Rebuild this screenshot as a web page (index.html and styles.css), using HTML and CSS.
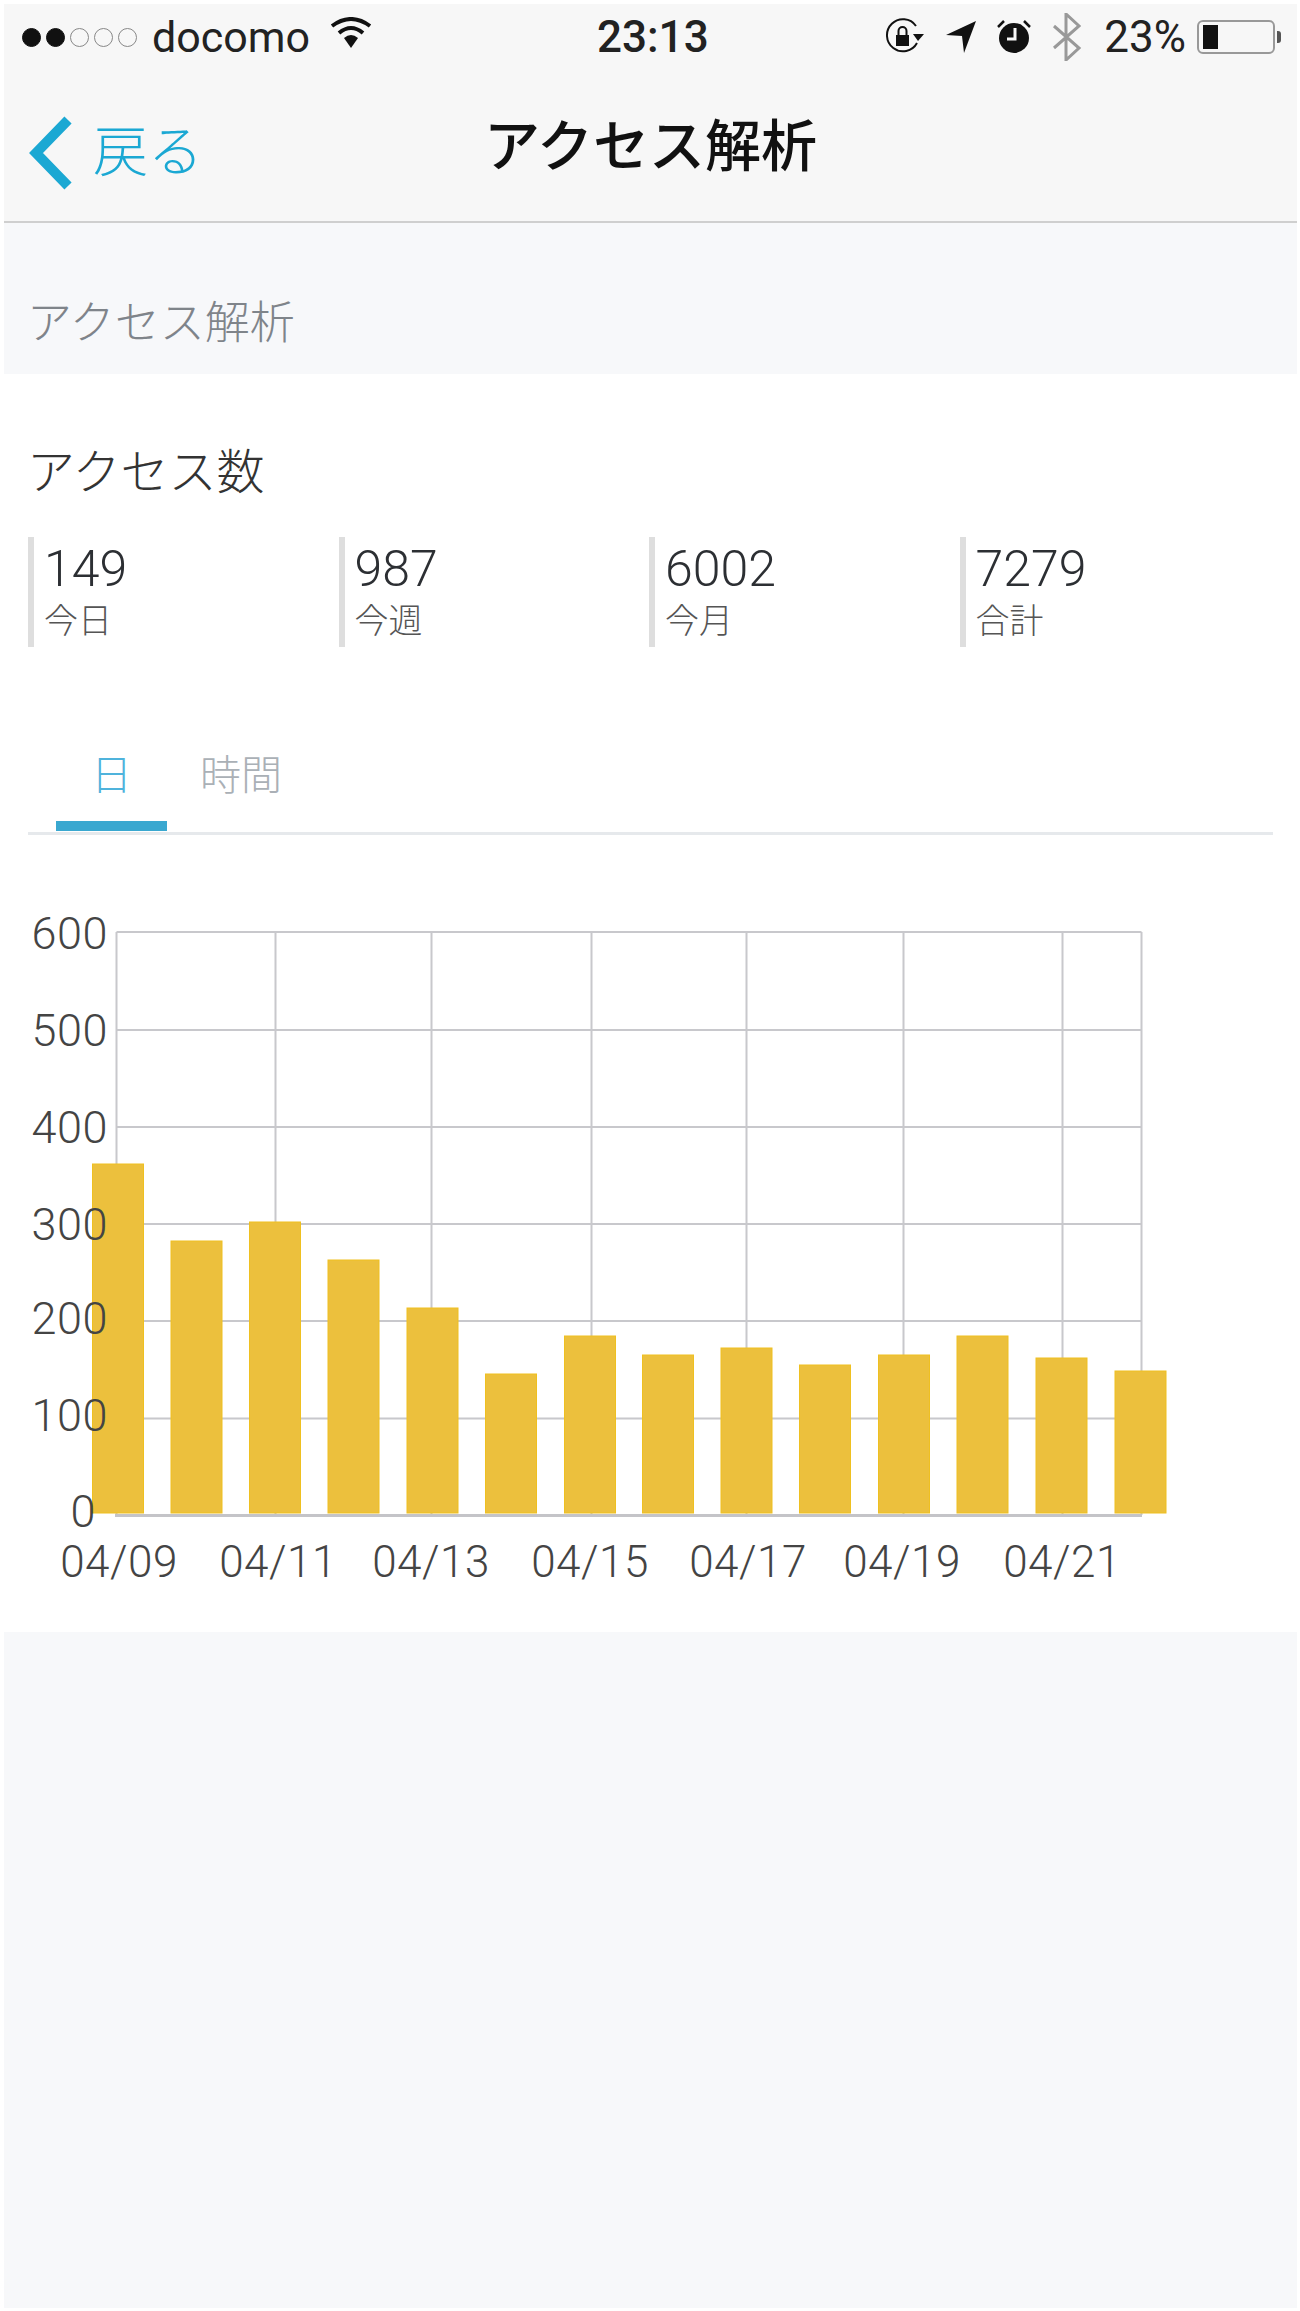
FILE: index.html
```html
<!DOCTYPE html>
<html lang="ja">
<head>
    <meta charset="UTF-8">
    <meta name="viewport" content="width=device-width, initial-scale=1.0">
    <title>アクセス解析</title>
    <link rel="stylesheet" href="styles.css">
</head>
<body>
    <div class="phone">
        <header class="top-bar">
            <div class="status-bar">
                <div class="status-left">
                    <span class="signal">
                        <i class="dot on"></i><i class="dot on"></i><i class="dot"></i><i class="dot"></i><i class="dot"></i>
                    </span>
                    <span class="carrier">docomo</span>
                    <svg class="wifi" width="42" height="32" viewBox="0 0 42 32">
                        <path d="M2 9 Q21 -5 40 9" fill="none" stroke="#111" stroke-width="4"/>
                        <path d="M9 16 Q21 6 33 16" fill="none" stroke="#111" stroke-width="4"/>
                        <path d="M14 21 Q21 15 28 21 L21 31 Z" fill="#111"/>
                    </svg>
                </div>
                <div class="status-time">23:13</div>
                <div class="status-right">
                    <svg class="ic-lock" width="40" height="38" viewBox="0 0 40 38">
                        <path d="M32 25 A16 16 0 1 1 31 8" fill="none" stroke="#111" stroke-width="2"/>
                        <path d="M28 16 L39 16 L33 23 Z" fill="#111"/>
                        <rect x="11" y="17" width="13" height="11" fill="#111"/>
                        <path d="M13.5 17 V13 A4 4 0 0 1 21.500 13 V17" fill="none" stroke="#111" stroke-width="2"/>
                    </svg>
                    <svg class="ic-arrow" width="32" height="34" viewBox="0 0 32 34">
                        <path d="M1 15 L31 1 L19 33 L17 16 Z" fill="#111"/>
                    </svg>
                    <svg class="ic-alarm" width="34" height="34" viewBox="0 0 34 34">
                        <path d="M1 7 L7 1 M33 7 L27 1" stroke="#111" stroke-width="2.5"/>
                        <circle cx="17" cy="18" r="15" fill="#111"/>
                        <path d="M18 8 V19 H10" fill="none" stroke="#f7f7f7" stroke-width="3"/>
                    </svg>
                    <svg class="ic-bt" width="30" height="48" viewBox="0 0 30 48">
                        <path d="M2 13 L27 35 L14 47 V1 L27 13 L2 35" fill="none" stroke="#999" stroke-width="3"/>
                    </svg>
                    <span class="battery-pct">23%</span>
                    <span class="battery"><span class="battery-level"></span></span>
                    <span class="battery-tip"></span>
                </div>
            </div>
            <nav class="nav-bar">
                <a class="back">
                    <svg class="back-arrow" width="46" height="74" viewBox="0 0 46 74">
                        <path d="M40 4 L8 37 L40 70" fill="none" stroke="#1ba8d3" stroke-width="10"/>
                    </svg>
                    <span>戻る</span>
                </a>
                <h1>アクセス解析</h1>
            </nav>
        </header>

        <div class="section-title">アクセス解析</div>

        <section class="panel">
            <h2>アクセス数</h2>
            <div class="stats">
                <div class="stat"><div class="stat-num">149</div><div class="stat-label">今日</div></div>
                <div class="stat"><div class="stat-num">987</div><div class="stat-label">今週</div></div>
                <div class="stat"><div class="stat-num">6002</div><div class="stat-label">今月</div></div>
                <div class="stat"><div class="stat-num">7279</div><div class="stat-label">合計</div></div>
            </div>

            <div class="tabs">
                <div class="tab active">日</div>
                <div class="tab">時間</div>
            </div>

            <div class="chart">
                <svg width="1296" height="720" viewBox="0 895 1296 720" class="chart-svg">
                    <g class="grid">
                        <path d="M116.5 932 H1141.5 M116.5 1030 H1141.5 M116.5 1127 H1141.5 M116.5 1224 H1141.5 M116.5 1321 H1141.5 M116.5 1418.5 H1141.5"/>
                        <path d="M116.5 932 V1515 M275.5 932 V1515 M431.5 932 V1515 M591.5 932 V1515 M746.5 932 V1515 M903.5 932 V1515 M1062.5 932 V1515 M1141.5 932 V1515"/>
                    </g>
                    <path class="axis" d="M115 1515.5 H1142"/>
                    <g class="bars">
                        <rect x="92.5" y="1164" width="51" height="349"/>
                        <rect x="171" y="1241" width="51" height="272"/>
                        <rect x="249.500" y="1222" width="51" height="291"/>
                        <rect x="328" y="1260" width="51" height="253"/>
                        <rect x="407" y="1308" width="51" height="205"/>
                        <rect x="485.500" y="1374" width="51" height="139"/>
                        <rect x="564.500" y="1336" width="51" height="177"/>
                        <rect x="642.500" y="1355" width="51" height="158"/>
                        <rect x="721" y="1348" width="51" height="165"/>
                        <rect x="799.500" y="1365" width="51" height="148"/>
                        <rect x="878.500" y="1355" width="51" height="158"/>
                        <rect x="957" y="1336" width="51" height="177"/>
                        <rect x="1036" y="1358" width="51" height="155"/>
                        <rect x="1115" y="1371" width="51" height="142"/>
                    </g>
                    <g class="y-labels">
                        <text x="108" y="949">600</text>
                        <text x="108" y="1046">500</text>
                        <text x="108" y="1143">400</text>
                        <text x="108" y="1240">300</text>
                        <text x="108" y="1334">200</text>
                        <text x="108" y="1431">100</text>
                        <text x="96" y="1527">0</text>
                    </g>
                    <g class="x-labels">
                        <text x="119" y="1577">04/09</text>
                        <text x="278" y="1577">04/11</text>
                        <text x="431" y="1577">04/13</text>
                        <text x="590" y="1577">04/15</text>
                        <text x="748" y="1577">04/17</text>
                        <text x="902" y="1577">04/19</text>
                        <text x="1062" y="1577">04/21</text>
                    </g>
                </svg>
            </div>
        </section>
    </div>
</body>
</html>
```

FILE: styles.css
```css
* {
    margin: 0;
    padding: 0;
    box-sizing: border-box;
}

body {
    background: #fff;
    font-family: Roboto, "Liberation Sans", "Noto Sans CJK JP", sans-serif;
    color: #222;
}

.phone {
    margin: 4px 3px 3px 4px;
    height: 2304px;
    background: #f7f8fa;
    overflow: hidden;
}

/* top bars */
.top-bar {
    background: #f7f7f7;
    height: 219px;
    border-bottom: 2px solid #cfcfcf;
}

.status-bar {
    display: flex;
    align-items: center;
    justify-content: space-between;
    height: 66px;
    padding: 0 16px 0 18px;
    position: relative;
}

.status-left,
.status-right {
    display: flex;
    align-items: center;
}

.signal {
    display: flex;
    gap: 5px;
    margin-right: 15px;
}

.dot {
    width: 19px;
    height: 19px;
    border: 1.5px solid #888;
    border-radius: 50%;
}

.dot.on {
    background: #111;
    border-color: #111;
}

.carrier {
    font-size: 43px;
    color: #222;
}

.wifi {
    margin-left: 20px;
    margin-bottom: 8px;
}

.status-time {
    position: absolute;
    left: 593px;
    font-size: 44px;
    font-weight: 500;
    color: #222;
}

.status-right {
    font-size: 44px;
}

.ic-lock {
    margin-right: 20px;
}

.ic-arrow {
    margin-right: 20px;
}

.ic-alarm {
    margin-right: 21px;
}

.ic-bt {
    margin-right: 22px;
}

.battery-pct {
    margin-right: 11px;
}

.battery {
    display: block;
    width: 78px;
    height: 34px;
    border: 2px solid #999;
    border-radius: 6px;
    padding: 3px 4px;
}

.battery-level {
    display: block;
    width: 15px;
    height: 100%;
    background: #111;
}

.battery-tip {
    width: 4px;
    height: 12px;
    margin-left: 2px;
    background: #555;
    border-radius: 0 3px 3px 0;
}

.nav-bar {
    display: flex;
    align-items: center;
    justify-content: center;
    height: 149px;
    position: relative;
}

.nav-bar h1 {
    font-size: 56px;
    font-weight: 500;
    color: #111;
    margin-bottom: 6px;
}

.back {
    position: absolute;
    left: 24px;
    top: 37px;
    display: flex;
    align-items: center;
    gap: 19px;
    color: #1ba8d3;
    font-size: 55px;
    font-weight: 300;
}

.back span {
    margin-bottom: 12px;
}

.section-title {
    height: 151px;
    padding: 64px 0 0 23px;
    font-size: 45px;
    font-weight: 300;
    color: #7f848a;
}

/* white panel */
.panel {
    background: #fff;
    height: 1258px;
    padding: 65px 24px 0 24px;
}

.panel h2 {
    font-size: 48px;
    font-weight: 300;
    color: #333;
    margin-left: -1px;
    line-height: 68px;
}

.stats {
    display: grid;
    grid-template-columns: repeat(4, 310.5px);
    margin-top: 30px;
}

.stat {
    border-left: 6px solid #dedede;
    height: 110px;
    padding: 4px 0 0 10px;
}

.stat-num {
    font-size: 50px;
    font-weight: 300;
    line-height: 56px;
    color: #2c2f33;
}

.stat-label {
    font-size: 34px;
    font-weight: 300;
    line-height: 48px;
    color: #555;
}

.tabs {
    display: flex;
    margin-top: 85px;
    width: 1245px;
    height: 103px;
    border-bottom: 3px solid #e6e9ec;
}

.tab {
    width: 111px;
    padding-top: 10px;
    margin-left: 28px;
    font-size: 41px;
    font-weight: 300;
    text-align: center;
    color: #aab0b6;
}

.tab + .tab {
    width: auto;
    margin-left: 33px;
}

.tab.active {
    color: #4fb3dc;
    height: 99px;
    border-bottom: 10px solid #3aa8d0;
}

.chart-svg {
    display: block;
    margin: 60px 0 0 -28px;
}

.grid path {
    fill: none;
    stroke: #c8c8cc;
    stroke-width: 2;
}

.axis {
    fill: none;
    stroke: #c4c4c8;
    stroke-width: 3;
}

.bars rect {
    fill: #ecc03d;
    stroke: #efc020;
    stroke-width: 1;
}

.y-labels text {
    font-size: 45px;
    font-weight: 300;
    letter-spacing: 0.5px;
    text-anchor: end;
    fill: #444;
}

.x-labels text {
    font-size: 44px;
    font-weight: 300;
    letter-spacing: 0.5px;
    text-anchor: middle;
    fill: #444;
}
```
